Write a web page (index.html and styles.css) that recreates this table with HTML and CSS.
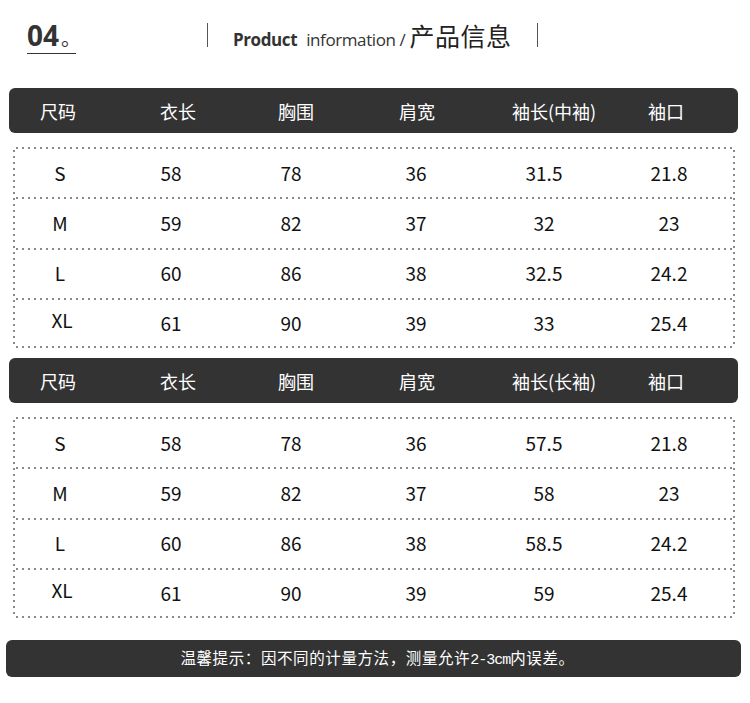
FILE: index.html
```html
<!DOCTYPE html>
<html lang="zh">
<head>
<meta charset="utf-8">
<link rel="stylesheet" href="styles.css">
</head>
<body>
<div class="page">
  <div class="top">
    <div class="num">04<span class="dot">。</span></div>
    <div class="bar bar-left"></div>
    <div class="title"><b>Product</b> <span class="info">information /</span> <span class="cn">产品信息</span></div>
    <div class="bar"></div>
  </div>

  <div class="thead">
    <span>尺码</span><span>衣长</span><span>胸围</span><span>肩宽</span><span>袖长(中袖)</span><span>袖口</span>
  </div>
  <div class="tbody">
    <div class="row"><span>S</span><span>58</span><span>78</span><span>36</span><span>31.5</span><span>21.8</span></div>
    <div class="row"><span>M</span><span>59</span><span>82</span><span>37</span><span>32</span><span>23</span></div>
    <div class="row"><span>L</span><span>60</span><span>86</span><span>38</span><span>32.5</span><span>24.2</span></div>
    <div class="row"><span class="sz">XL</span><span>61</span><span>90</span><span>39</span><span>33</span><span>25.4</span></div>
  </div>

  <div class="thead thead2">
    <span>尺码</span><span>衣长</span><span>胸围</span><span>肩宽</span><span>袖长(长袖)</span><span>袖口</span>
  </div>
  <div class="tbody">
    <div class="row"><span>S</span><span>58</span><span>78</span><span>36</span><span>57.5</span><span>21.8</span></div>
    <div class="row"><span>M</span><span>59</span><span>82</span><span>37</span><span>58</span><span>23</span></div>
    <div class="row"><span>L</span><span>60</span><span>86</span><span>38</span><span>58.5</span><span>24.2</span></div>
    <div class="row"><span class="sz">XL</span><span>61</span><span>90</span><span>39</span><span>59</span><span>25.4</span></div>
  </div>

  <div class="note"><p class="note-text">温馨提示：因不同的计量方法，测量允许<span class="mono">2-3cm</span>内误差。</p></div>
</div>
</body>
</html>
```
FILE: styles.css
```css
* { box-sizing: border-box; }
html, body { margin: 0; padding: 0; background: #fff; }
body {
  font-family: "Noto Sans CJK SC", "Noto Sans", sans-serif;
  color: #111;
  width: 750px;
  height: 703px;
  overflow: hidden;
}

.top {
  display: flex;
  align-items: center;
  height: 88px;
  padding: 0 0 18px 27px;
}
.num {
  font-family: "Open Sans", sans-serif;
  font-weight: 700;
  font-size: 28px;
  color: #333;
  line-height: 28px;
  border-bottom: 1.5px solid #333;
  padding-bottom: 1px;
  width: 49px;
  white-space: nowrap;
  margin-top: 4px;
}
.num .dot {
  font-family: "Noto Sans CJK SC", sans-serif;
  font-weight: 400;
  font-size: 20px;
  margin-left: 2px;
}
.bar {
  width: 1px;
  height: 24px;
  background: #555;
  margin-left: 26px;
}
.bar-left { margin-left: 131px; }
.title {
  margin-left: 25px;
  display: flex;
  align-items: baseline;
  color: #333;
  white-space: nowrap;
}
.title b {
  font-family: "Open Sans", sans-serif;
  font-weight: 700;
  font-size: 17px;
  letter-spacing: -0.4px;
}
.title .info {
  font-family: "Open Sans", sans-serif;
  font-size: 17px;
  margin-left: 9px;
  letter-spacing: -0.4px;
}
.title .cn {
  font-size: 25px;
  margin-left: 4px;
  color: #222;
  letter-spacing: 0.5px;
}

.thead {
  display: grid;
  grid-template-columns: 98px 142px 94px 148px 126px 98px;
  align-items: center;
  margin: 0 12px 0 9px;
  height: 45px;
  background: #333;
  border-radius: 6px;
  color: #fff;
  font-size: 18px;
  text-align: center;
}
.thead2 { margin-top: 10px; }

.tbody {
  margin: 14px 15px 0 13px;
  --dc: #8a8a8a;
  background-image:
    linear-gradient(to right, var(--dc) 2px, transparent 2px),
    linear-gradient(to right, var(--dc) 2px, transparent 2px),
    linear-gradient(var(--dc) 2px, transparent 2px),
    linear-gradient(var(--dc) 2px, transparent 2px);
  background-size: 6px 2px, 6px 2px, 2px 6px, 2px 6px;
  background-repeat: repeat-x, repeat-x, repeat-y, repeat-y;
  background-position: 3px 0, 3px 100%, 0 3px, 100% 3px;
}
.row {
  display: grid;
  grid-template-columns: 94px 128px 112px 138px 118px 132px;
  align-items: center;
  height: 50.25px;
  font-size: 19px;
  color: #111;
  text-align: center;
}
.row + .row {
  background: linear-gradient(to right, var(--dc) 2px, transparent 2px) 3px 0 / 6px 2px repeat-x;
}
.row .sz { margin-top: -6px; margin-left: 4px; }

.note {
  margin: 22px 9px 0 6px;
  height: 37px;
  background: #333;
  border-radius: 6px;
  color: #fff;
  display: flex;
  align-items: center;
  justify-content: center;
  padding-left: 8px;
}
.note-text {
  margin: 0;
  font-size: 15.5px;
  letter-spacing: 0.6px;
  line-height: 20px;
  white-space: nowrap;
}
.note .mono {
  font-family: "Liberation Mono", monospace;
  font-size: 15px;
  letter-spacing: -1px;
}
```
